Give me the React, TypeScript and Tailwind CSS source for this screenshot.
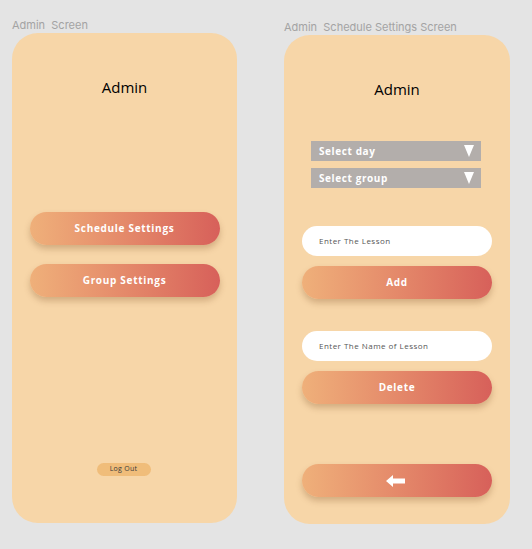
import React from "react";

const font = { fontFamily: '"Open Sans", "Noto Sans", sans-serif' };

function GradButton({ children, className = "" }: { children: React.ReactNode; className?: string }) {
  return (
    <div
      className={
        "w-[190px] h-[33px] rounded-full bg-linear-to-r from-[#efb07a] to-[#d7605a] shadow-[0_4px_6px_rgba(120,70,30,0.28)] flex items-center justify-center text-white text-[10px] font-bold tracking-[0.07em] " +
        className
      }
    >
      {children}
    </div>
  );
}

function Select({ label, className = "" }: { label: string; className?: string }) {
  return (
    <div className={"w-[170px] h-[20px] bg-[#b3aeab] flex items-center justify-between pl-[8px] pr-[7px] " + className}>
      <span className="text-white text-[10px] font-bold tracking-[0.06em]">{label}</span>
      <svg width="10" height="12" viewBox="0 0 10 12">
        <polygon points="0,0 10,0 5,12" fill="#ffffff" />
      </svg>
    </div>
  );
}

function Input({ placeholder, className = "" }: { placeholder: string; className?: string }) {
  return (
    <div className={"w-[190px] h-[30px] rounded-full bg-white flex items-center pl-[17px] " + className}>
      <span className="text-[8px] text-[#555555] tracking-[0.06em]">{placeholder}</span>
    </div>
  );
}

export default function App() {
  return (
    <div className="w-[532px] h-[549px] bg-[#e4e4e4] flex pl-[12px] pt-[17px] gap-[47px]" style={font}>
      <div className="flex flex-col">
        <div className="text-[11px] leading-[16px] text-[#a3a3a3]" style={{ fontFamily: "Inter, sans-serif" }}>
          Admin&nbsp; Screen
        </div>
        <div className="w-[225px] h-[490px] rounded-[26px] bg-[#f7d6a8] flex flex-col items-center pt-[44px]">
          <div className="h-[20px] leading-[20px] text-[15px] text-black">Admin</div>
          <GradButton className="mt-[115px]">Schedule Settings</GradButton>
          <GradButton className="mt-[19px]">Group Settings</GradButton>
          <div className="mt-[166px] w-[54px] h-[13px] rounded-full bg-[#f0bd7a] flex items-center justify-center text-[7px] text-[#3a3a3a] tracking-[0.04em] -translate-x-[1px]">
            Log Out
          </div>
        </div>
      </div>
      <div className="flex flex-col mt-[2px]">
        <div className="text-[11px] leading-[16px] text-[#a3a3a3]" style={{ fontFamily: "Inter, sans-serif" }}>
          Admin&nbsp; Schedule Settings Screen
        </div>
        <div className="w-[226px] h-[489px] rounded-[26px] bg-[#f7d6a8] flex flex-col items-center pt-[44px]">
          <div className="h-[20px] leading-[20px] text-[15px] text-black">Admin</div>
          <Select label="Select day" className="mt-[42px] -translate-x-[1px]" />
          <Select label="Select group" className="mt-[7px] -translate-x-[1px]" />
          <Input placeholder="Enter The Lesson" className="mt-[38px]" />
          <GradButton className="mt-[10px]">Add</GradButton>
          <Input placeholder="Enter The Name of Lesson" className="mt-[32px]" />
          <GradButton className="mt-[10px]">Delete</GradButton>
          <GradButton className="mt-[60px]">
            <svg width="19" height="12" viewBox="0 0 19 12" className="-translate-x-[2px]">
              <polygon points="0,6 7,0 7,3.5 19,3.5 19,8.5 7,8.5 7,12" fill="#ffffff" />
            </svg>
          </GradButton>
        </div>
      </div>
    </div>
  );
}
